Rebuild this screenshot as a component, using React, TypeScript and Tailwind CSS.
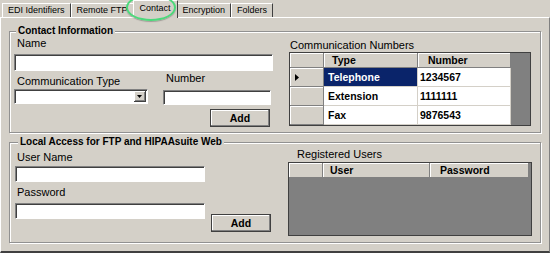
import React from 'react';

const sunken = "border border-t-[#808080] border-l-[#808080] border-b-white border-r-white shadow-[inset_1px_1px_0_#404040] bg-white";
const raised = "border-r border-b border-r-[#808080] border-b-[#808080] shadow-[inset_1px_1px_0_#fff] bg-[#d4d0c8]";
const etched = "relative border border-[#919191] shadow-[inset_1px_1px_0_#fff,1px_1px_0_#fff]";

const Tab = ({ label, active }: { label: string; active?: boolean }) =>
  active ? (
    <div className="relative z-10 -mb-px mx-[-1px] h-[18px] px-[6px] border-l border-t border-white border-r border-r-[#404040] bg-[#d4d0c8] text-[9px] leading-[14px]">
      {label}
    </div>
  ) : (
    <div className="h-[14px] px-[5px] border-l border-t border-white border-r border-r-[#404040] text-[9px] leading-[13px]">
      {label}
    </div>
  );

const Legend = ({ children, left }: { children: React.ReactNode; left: string }) => (
  <span className={`absolute top-[-7px] ${left} px-[2px] bg-[#d4d0c8] font-bold text-[10px] leading-[12px]`}>{children}</span>
);

const AddButton = () => (
  <button className="w-[60px] h-[18px] border border-[#404040] shadow-[inset_-1px_-1px_0_#808080,inset_1px_1px_0_#fff] bg-[#d4d0c8] font-bold text-[10.5px] leading-[14px]">
    Add
  </button>
);

const HeadCell = ({ children, pad = 'pl-[8px]' }: { children?: React.ReactNode; pad?: string }) => (
  <div className={`${raised} ${pad} font-bold text-[10.5px] leading-[14px]`}>{children}</div>
);

const rows = [
  { type: 'Telephone', number: '1234567', selected: true },
  { type: 'Extension', number: '1111111' },
  { type: 'Fax', number: '9876543' },
];

export default function App() {
  return (
    <div className="relative w-[550px] h-[253px] overflow-hidden bg-[#d4d0c8] text-black text-[11px] font-['Liberation_Sans',Arial,sans-serif]">
      {/* Tabs */}
      <div className="flex items-end h-[17px] pl-[2px]">
        <Tab label="EDI Identifiers" />
        <Tab label="Remote FTP" />
        <Tab label="Contact" active />
        <Tab label="Encryption" />
        <Tab label="Folders" />
      </div>
      {/* highlight ring around the Contact tab */}
      <div className="absolute left-[126px] top-[-6px] w-[50px] h-[27px] rounded-[50%] border-2 border-[#4cd97b] shadow-[0_1px_1px_rgba(0,0,0,0.25)] z-20" />

      {/* Panel */}
      <div className="h-[236px] border-t border-l border-white border-r border-r-[#808080] border-b-2 border-b-[#404040] pt-[13px] px-[8px]">
        {/* Contact Information */}
        <div className={`${etched} w-[532px] h-[102px]`}>
          <Legend left="left-[6px]">Contact Information</Legend>
          <div className="flex pl-[4px] pt-[5px]">
            <div className="w-[260px]">
              <div className="ml-[3px] leading-[13px]">Name</div>
              <div className={`${sunken} mt-[4px] w-[259px] h-[17px]`} />
              <div className="flex mt-[4px]">
                <div className="w-[149px]">
                  <div className="ml-[3px] leading-[13px]">Communication Type</div>
                  <div className={`${sunken} flex justify-end mt-[1px] w-[134px] h-[15px]`}>
                    <div className="w-[12px] h-[11px] mt-[1px] mr-[1px] flex items-center justify-center border-r border-b border-[#404040] shadow-[inset_1px_1px_0_#fff,inset_-1px_-1px_0_#808080] bg-[#d4d0c8]">
                      <svg width="5" height="3" viewBox="0 0 5 3"><polygon points="0,0 5,0 2.5,3" fill="#000" /></svg>
                    </div>
                  </div>
                </div>
                <div>
                  <div className="ml-[3px] -mt-[3px] leading-[13px]">Number</div>
                  <div className={`${sunken} mt-[5px] w-[108px] h-[15px]`} />
                </div>
              </div>
              <div className="ml-[196px] mt-[4px]">
                <AddButton />
              </div>
            </div>
            <div className="pt-[2px] pl-[15px]">
              <div className="ml-[1px] leading-[13px]">Communication Numbers</div>
              <div className="w-[242px] h-[74px] border border-[#404040] bg-[#808080]">
                <div className="grid grid-cols-[34px_94px_93px] grid-rows-[15px_19px_19px_19px]">
                  <HeadCell />
                  <HeadCell>Type</HeadCell>
                  <HeadCell pad="pl-[10px]">Number</HeadCell>
                  {rows.map((r) => (
                    <React.Fragment key={r.type}>
                      <div className={`${raised} flex items-center pl-[5px]`}>
                        {r.selected && (
                          <svg width="4" height="7" viewBox="0 0 4 7"><polygon points="0,0 4,3.5 0,7" fill="#000" /></svg>
                        )}
                      </div>
                      <div className={`border-r border-b border-[#d4d0c8] pl-[4px] font-bold text-[10.5px] leading-[18px] ${r.selected ? 'bg-[#0a246a] text-white' : 'bg-white'}`}>
                        {r.type}
                      </div>
                      <div className="border-r border-b border-[#d4d0c8] bg-white pl-[2px] font-bold text-[10.5px] leading-[18px]">
                        {r.number}
                      </div>
                    </React.Fragment>
                  ))}
                </div>
              </div>
            </div>
          </div>
        </div>

        {/* Local Access */}
        <div className={`${etched} mt-[9px] w-[532px] h-[101px]`}>
          <Legend left="left-[8px]">Local Access for FTP and HIPAAsuite Web</Legend>
          <div className="flex pl-[5px] pt-[5px]">
            <div className="w-[260px] pt-[3px]">
              <div className="ml-[2px] leading-[13px]">User Name</div>
              <div className={`${sunken} mt-[2px] w-[190px] h-[16px]`} />
              <div className="ml-[2px] mt-[4px] leading-[13px]">Password</div>
              <div className="flex items-start mt-[4px]">
                <div className={`${sunken} w-[190px] h-[16px]`} />
                <div className="ml-[6px] mt-[11px]">
                  <AddButton />
                </div>
              </div>
            </div>
            <div>
              <div className="ml-[22px] leading-[13px]">Registered Users</div>
              <div className="ml-[13px] mt-[1px] w-[244px] h-[74px] border border-[#404040] bg-[#808080]">
                <div className="grid grid-cols-[34px_107px_99px] grid-rows-[15px]">
                  <HeadCell />
                  <HeadCell pad="pl-[7px]">User</HeadCell>
                  <HeadCell pad="pl-[10px]">Password</HeadCell>
                </div>
              </div>
            </div>
          </div>
        </div>
      </div>
    </div>
  );
}
